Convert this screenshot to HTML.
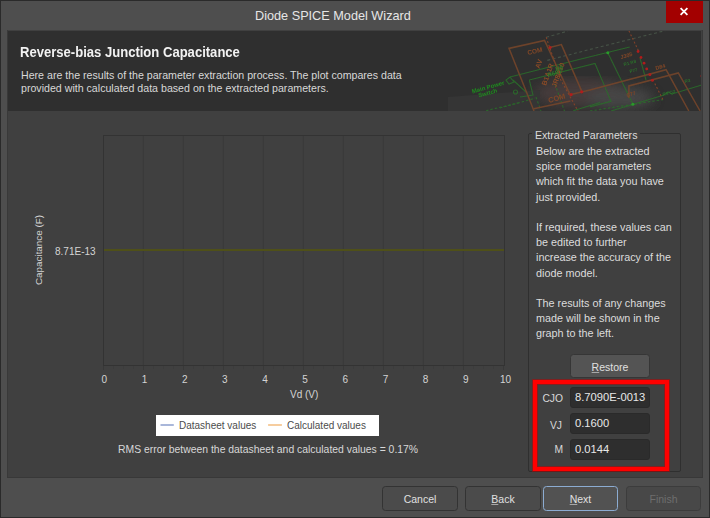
<!DOCTYPE html>
<html><head><meta charset="utf-8">
<style>
*{margin:0;padding:0;box-sizing:border-box}
html,body{width:710px;height:518px;overflow:hidden;background:#4e4e4e}
body{position:relative;font-family:"Liberation Sans",sans-serif;color:#dcdcdc}
.a{position:absolute;white-space:nowrap}
#frame{position:absolute;left:0;top:0;width:710px;height:518px;border:1px solid #2a2a2a;background:#4e4e4e}
#title{left:255px;top:9px;font-size:12.7px;color:#e6e6e6;letter-spacing:0px}
#close{left:666px;top:1px;width:37px;height:22px;background:#a30000}
#hdr{left:8px;top:31px;width:693px;height:80px;background:#2f2f2f;overflow:hidden}
#body{left:7px;top:30px;width:696px;height:448px;background:#404040;border-left:1px solid #393939;border-right:1px solid #393939;border-bottom:1px solid #383838}
.h1{font-weight:bold;font-size:13.9px;color:#f2f2f2;transform:scaleX(0.94);transform-origin:0 0}
.desc{font-size:10.63px;color:#d8d8d8;line-height:13px}
.plot{left:103px;top:135px;width:402px;height:231px;border:1px solid #333333}
.grid{position:absolute;top:0;width:1px;height:229px;background:#3a3a3a;box-shadow:-1px 0 0 #3e3e3e}
.tick{position:absolute;font-size:10px;color:#d4d4d4}
.gb{left:528px;top:133px;width:153px;height:339px;border:1px solid #2f2f2f;border-radius:2px}
.ptxt{font-size:10.8px;line-height:15px;color:#dcdcdc}
.btn{position:absolute;border:1px solid #333333;border-radius:3.5px;background:#4b4b4b;font-size:10.5px;color:#e0e0e0;text-align:center}
.inp{position:absolute;left:570px;width:80px;height:21px;background:#2e2e2e;border:1px solid #2a2a2a;border-radius:3px;font-size:11.2px;color:#e8e8e8;padding-left:4px}
.lbl{position:absolute;font-size:10.3px;color:#d8d8d8;text-align:right;width:40px;left:523px}
</style></head><body>
<div id="frame"></div>
<div class="a" id="title">Diode SPICE Model Wizard</div>
<div class="a" id="close">
 <svg width="37" height="22" style="position:absolute;left:0;top:0"><path d="M14.6 7.2 L21.4 13.8 M21.4 7.2 L14.6 13.8" stroke="#fff" stroke-width="1.8"/></svg>
</div>
<div class="a" id="body"></div>
<div class="a" id="hdr">
  <div class="a h1" style="left:12px;top:12.5px">Reverse-bias Junction Capacitance</div>
 <div class="a desc" style="left:13px;top:38px">Here are the results of the parameter extraction process. The plot compares data<br>provided with calculated data based on the extracted parameters.</div>
</div>
<svg class="a" style="left:440px;top:31px" width="261" height="80" viewBox="440 31 261 80">
<defs>
 <filter id="bl" x="-5%" y="-5%" width="110%" height="110%"><feGaussianBlur stdDeviation="0.7"/></filter>
 <filter id="bl3" x="-5%" y="-5%" width="110%" height="110%"><feGaussianBlur stdDeviation="0.5"/></filter>
 <filter id="bl2"><feGaussianBlur stdDeviation="6"/></filter>
</defs>
<g filter="url(#bl2)" opacity="0.9">
 <ellipse cx="582" cy="93" rx="48" ry="14" fill="#4a3e3c"/>
 <ellipse cx="620" cy="98" rx="34" ry="11" fill="#4a4848"/>
 
</g>
<path d="M448 97 L540 90 L540 111 L448 111 Z" fill="#353535"/>
<g filter="url(#bl)" fill="none" stroke-width="1.1" opacity="0.85">
 <g stroke="#4a584a" stroke-dasharray="3 2.5">
  <path d="M546.2 37.3 L567.6 31.1"/>
  <path d="M590 49.4 L667.7 30"/>
  <path d="M547.3 60.4 L590 49.4"/>
 </g>
 <g stroke="#2a6e2a">
  <path d="M510 77 L580 59.3 L629.7 47"/>
  <path d="M529.3 80 L595 63.5 L611 101.3 L590 106.9"/>
  <path d="M529.3 80 L533 95 L520 97"/>
  <path d="M607.8 52.7 L632.9 104.2"/>
  <path d="M611 111 L664 95 L668 92 L672 94 L701.8 85"/>
  <path d="M510 77 L514 82 L509 84 L506 80 Z"/>
  <path d="M513 80 L527 93"/>
  <circle cx="515.5" cy="92" r="2"/>
  <path d="M573.2 110.8 L600 102.4"/>
  <path d="M640 58 L646 80"/>
 </g>
 <g stroke="#2a6e2a" stroke-dasharray="2.5 2">
  <path d="M500 108 L535.2 98.2"/>
  <path d="M486 110.7 L518.9 102.8"/>
  <path d="M555 84 L564.8 112"/>
  <path d="M536 97 L541 111"/>
  <path d="M590 111 L662.9 99.6"/>
 </g>
 <g stroke="#78462a" stroke-width="1.5">
  <path d="M534 111 L509 48.4 L544.5 40.4 L570.4 95.4"/>
  <path d="M533.8 108.7 L570.4 101"/>
  <path d="M549.6 47.5 L561.4 44.6 L581.7 91.1"/>
  <path d="M571 94.6 L590 89.9 L666.1 69.7 L688.8 111"/>
  <path d="M628.9 98 L628.9 85.9 L678.3 72.9 L700.1 111"/>
 </g>
 <g stroke="#8f4428" stroke-dasharray="2 2">
  <path d="M546.2 37.3 L560.8 80 L578 111"/>
  <path d="M628.9 30.8 L638.6 51"/>
  <path d="M654.8 83.5 L662.9 99.6"/>
 </g>
</g>
<g filter="url(#bl3)">
 <g fill="#b01c1c">
  <circle cx="550.1" cy="47.5" r="1.5"/><circle cx="571.1" cy="94.6" r="1.6"/><circle cx="581.7" cy="91.8" r="1.6"/>
  <circle cx="649.9" cy="74.5" r="1.5"/><circle cx="652.4" cy="80.2" r="1.5"/><circle cx="638.1" cy="51.5" r="1.4"/>
  <circle cx="641" cy="57.5" r="1.4"/><circle cx="644" cy="63.2" r="1.4"/><circle cx="646.7" cy="68.9" r="1.4"/>
  <circle cx="701.8" cy="76" r="1.3"/>
 </g>
 <g fill="#2a9a2a"><circle cx="607.8" cy="52.7" r="1.5"/><circle cx="632.9" cy="104.2" r="1.5"/></g>
 <g font-family="Liberation Sans" font-weight="bold">
  <text x="528" y="55" font-size="6.5" fill="#804626" transform="rotate(-13 528 55)">COM</text>
  <text x="549" y="103" font-size="7.5" fill="#804626" transform="rotate(-15 549 103)">COM</text>
  <text x="621" y="59" font-size="5.5" fill="#804626" transform="rotate(-15 621 59)">J305</text>
  <text x="656" y="70" font-size="5.5" fill="#804626" transform="rotate(-15 656 70)">D84</text>
  <text x="472.5" y="93.5" font-size="6" fill="#1e8a1e" transform="rotate(-15.5 472.5 93.5)">Main Power</text>
  <text x="479" y="97.5" font-size="6" fill="#1e8a1e" transform="rotate(-15.5 479 97.5)">Switch</text>
  <text x="546" y="86" font-size="7" fill="#8a4a26" transform="rotate(-70 546 86)">B1A1R</text><text x="539.5" y="69" font-size="7" fill="#8a4a26" transform="rotate(-70 539.5 69)">AV</text>
  <text x="556" y="88" font-size="7" fill="#8a4a26" transform="rotate(-70 556 88)">JR8R10</text>
  <text x="548" y="77" font-size="6" fill="#2a7a2a" transform="rotate(-15 548 77)">R6R7</text><text x="556" y="71" font-size="6" fill="#2a7a2a" transform="rotate(-15 556 71)">R9</text>
  <text x="627" y="97" font-size="5" fill="#804626" transform="rotate(-15 627 97)">C77</text>
  <text x="624" y="66" font-size="4.5" fill="#2a6e2a" transform="rotate(-15 624 66)">R1 R8</text>
  <text x="630" y="73" font-size="4.5" fill="#2a6e2a" transform="rotate(-15 630 73)">P77</text>
  <text x="663" y="96" font-size="4.5" fill="#2a6e2a" transform="rotate(-15 663 96)">R5 Q2</text>
  <text x="685" y="83" font-size="4.5" fill="#2a6e2a" transform="rotate(-15 685 83)">R3</text>
 </g>
</g>
</svg>


<!-- chart -->
<div class="a plot">
 <div class="grid" style="left:39px"></div>
 <div class="grid" style="left:79px"></div>
 <div class="grid" style="left:119px"></div>
 <div class="grid" style="left:159px"></div>
 <div class="grid" style="left:199px"></div>
 <div class="grid" style="left:239px"></div>
 <div class="grid" style="left:279px"></div>
 <div class="grid" style="left:319px"></div>
 <div class="grid" style="left:359px"></div>
 <div style="position:absolute;left:0;top:113px;width:400px;height:2px;background:#4f5018"></div>
</div>
<div class="a" style="left:38px;top:249.5px;font-size:9.85px;color:#d4d4d4;transform:translate(-50%,-50%) rotate(-90deg)">Capacitance (F)</div>
<div class="a tick" style="left:55px;top:246px">8.71E-13</div>
<div class="a tick" style="left:104.40px;top:373.5px;transform:translateX(-50%)">0</div>
<div class="a tick" style="left:144.55px;top:373.5px;transform:translateX(-50%)">1</div>
<div class="a tick" style="left:184.70px;top:373.5px;transform:translateX(-50%)">2</div>
<div class="a tick" style="left:224.85px;top:373.5px;transform:translateX(-50%)">3</div>
<div class="a tick" style="left:265.00px;top:373.5px;transform:translateX(-50%)">4</div>
<div class="a tick" style="left:305.15px;top:373.5px;transform:translateX(-50%)">5</div>
<div class="a tick" style="left:345.30px;top:373.5px;transform:translateX(-50%)">6</div>
<div class="a tick" style="left:385.45px;top:373.5px;transform:translateX(-50%)">7</div>
<div class="a tick" style="left:425.60px;top:373.5px;transform:translateX(-50%)">8</div>
<div class="a tick" style="left:465.75px;top:373.5px;transform:translateX(-50%)">9</div>
<div class="a tick" style="left:505.60px;top:373.5px;transform:translateX(-50%)">10</div>
<div class="a" style="left:103px;top:366px;width:1px;height:4px;background:#383838"></div><div class="a" style="left:113px;top:366px;width:1px;height:3px;background:#3c3c3c"></div><div class="a" style="left:123px;top:366px;width:1px;height:3px;background:#3c3c3c"></div><div class="a" style="left:133px;top:366px;width:1px;height:3px;background:#3c3c3c"></div><div class="a" style="left:143px;top:366px;width:1px;height:4px;background:#383838"></div><div class="a" style="left:153px;top:366px;width:1px;height:3px;background:#3c3c3c"></div><div class="a" style="left:163px;top:366px;width:1px;height:3px;background:#3c3c3c"></div><div class="a" style="left:173px;top:366px;width:1px;height:3px;background:#3c3c3c"></div><div class="a" style="left:183px;top:366px;width:1px;height:4px;background:#383838"></div><div class="a" style="left:193px;top:366px;width:1px;height:3px;background:#3c3c3c"></div><div class="a" style="left:203px;top:366px;width:1px;height:3px;background:#3c3c3c"></div><div class="a" style="left:213px;top:366px;width:1px;height:3px;background:#3c3c3c"></div><div class="a" style="left:223px;top:366px;width:1px;height:4px;background:#383838"></div><div class="a" style="left:233px;top:366px;width:1px;height:3px;background:#3c3c3c"></div><div class="a" style="left:243px;top:366px;width:1px;height:3px;background:#3c3c3c"></div><div class="a" style="left:253px;top:366px;width:1px;height:3px;background:#3c3c3c"></div><div class="a" style="left:263px;top:366px;width:1px;height:4px;background:#383838"></div><div class="a" style="left:273px;top:366px;width:1px;height:3px;background:#3c3c3c"></div><div class="a" style="left:283px;top:366px;width:1px;height:3px;background:#3c3c3c"></div><div class="a" style="left:293px;top:366px;width:1px;height:3px;background:#3c3c3c"></div><div class="a" style="left:303px;top:366px;width:1px;height:4px;background:#383838"></div><div class="a" style="left:313px;top:366px;width:1px;height:3px;background:#3c3c3c"></div><div class="a" style="left:323px;top:366px;width:1px;height:3px;background:#3c3c3c"></div><div class="a" style="left:333px;top:366px;width:1px;height:3px;background:#3c3c3c"></div><div class="a" style="left:343px;top:366px;width:1px;height:4px;background:#383838"></div><div class="a" style="left:353px;top:366px;width:1px;height:3px;background:#3c3c3c"></div><div class="a" style="left:363px;top:366px;width:1px;height:3px;background:#3c3c3c"></div><div class="a" style="left:373px;top:366px;width:1px;height:3px;background:#3c3c3c"></div><div class="a" style="left:383px;top:366px;width:1px;height:4px;background:#383838"></div><div class="a" style="left:393px;top:366px;width:1px;height:3px;background:#3c3c3c"></div><div class="a" style="left:403px;top:366px;width:1px;height:3px;background:#3c3c3c"></div><div class="a" style="left:413px;top:366px;width:1px;height:3px;background:#3c3c3c"></div><div class="a" style="left:423px;top:366px;width:1px;height:4px;background:#383838"></div><div class="a" style="left:433px;top:366px;width:1px;height:3px;background:#3c3c3c"></div><div class="a" style="left:443px;top:366px;width:1px;height:3px;background:#3c3c3c"></div><div class="a" style="left:453px;top:366px;width:1px;height:3px;background:#3c3c3c"></div><div class="a" style="left:463px;top:366px;width:1px;height:4px;background:#383838"></div><div class="a" style="left:473px;top:366px;width:1px;height:3px;background:#3c3c3c"></div><div class="a" style="left:483px;top:366px;width:1px;height:3px;background:#3c3c3c"></div><div class="a" style="left:493px;top:366px;width:1px;height:3px;background:#3c3c3c"></div><div class="a" style="left:503px;top:366px;width:1px;height:4px;background:#383838"></div>
<div class="a tick" style="left:290px;top:389px">Vd (V)</div>
<div class="a" style="left:156px;top:415px;width:223px;height:21px;background:#fff"></div>
<svg class="a" style="left:156px;top:415px" width="224" height="21"><line x1="4.5" y1="10" x2="17.8" y2="10" stroke="#9aabd4" stroke-width="1.7"/><line x1="112.1" y1="10" x2="125.9" y2="10" stroke="#f5c48e" stroke-width="1.7"/></svg>
<div class="a" style="left:179px;top:419.5px;font-size:10px;color:#4c4c4c">Datasheet values</div>

<div class="a" style="left:287px;top:419.5px;font-size:10px;color:#4c4c4c">Calculated values</div>
<div class="a" style="left:118px;top:443.5px;font-size:10.4px;color:#d8d8d8">RMS error between the datasheet and calculated values = 0.17%</div>

<!-- right group -->
<div class="a gb"></div>
<div class="a" style="left:532px;top:128px;padding:0 3px;background:#404040;font-size:10.6px;color:#dcdcdc;line-height:14px">Extracted Parameters</div>
<div class="a ptxt" style="left:536px;top:144px">Below are the extracted</div>
<div class="a ptxt" style="left:536px;top:159px">spice model parameters</div>
<div class="a ptxt" style="left:536px;top:174px">which fit the data you have</div>
<div class="a ptxt" style="left:536px;top:190px">just provided.</div>
<div class="a ptxt" style="left:536px;top:220px">If required, these values can</div>
<div class="a ptxt" style="left:536px;top:235px">be edited to further</div>
<div class="a ptxt" style="left:536px;top:250px">increase the accuracy of the</div>
<div class="a ptxt" style="left:536px;top:266px">diode model.</div>
<div class="a ptxt" style="left:536px;top:296px">The results of any changes</div>
<div class="a ptxt" style="left:536px;top:311px">made will be shown in the</div>
<div class="a ptxt" style="left:536px;top:326px">graph to the left.</div>
<div class="btn" style="left:570px;top:354px;width:80px;height:24px;background:#545454;border-color:#363636;line-height:24px"><u style="text-decoration-color:#a8a8a8">R</u>estore</div>
<div class="a" style="left:533px;top:380px;width:136px;height:91px;border:4px solid #ff0000;box-shadow:0 0 0 1px rgba(190,0,0,0.5),inset 0 0 0 1px rgba(190,0,0,0.5)"></div>
<div class="lbl" style="top:393px">CJO</div>
<div class="inp" style="top:387px;line-height:19px">8.7090E-0013</div>
<div class="lbl" style="top:419.5px;left:522px">VJ</div>
<div class="inp" style="top:413px;line-height:19px">0.1600</div>
<div class="lbl" style="top:444px">M</div>
<div class="inp" style="top:439px;line-height:19px">0.0144</div>

<!-- bottom buttons -->
<div class="btn" style="left:382px;top:486px;width:76px;height:25px;line-height:24px">Cancel</div>
<div class="btn" style="left:465px;top:486px;width:76px;height:25px;line-height:24px"><u style="text-decoration-color:#a8a8a8">B</u>ack</div>
<div class="btn" style="left:543px;top:486px;width:75px;height:25px;line-height:24px;border-color:#8cacd2;background:#525252"><u style="text-decoration-color:#a8a8a8">N</u>ext</div>
<div class="btn" style="left:626px;top:486px;width:75px;height:25px;line-height:24px;color:#6e6e6e;background:#484848;border-color:#3c3c3c">Finish</div>
</body></html>
